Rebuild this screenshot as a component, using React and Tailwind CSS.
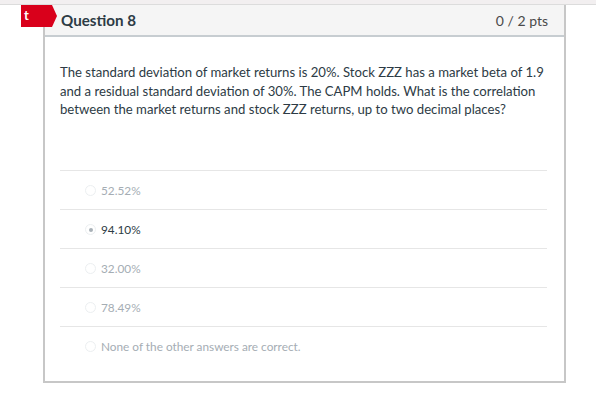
const answers = [
  { id: "a", label: "52.52%" },
  { id: "b", label: "94.10%", selected: true },
  { id: "c", label: "32.00%" },
  { id: "d", label: "78.49%" },
  { id: "e", label: "None of the other answers are correct." },
];

function Radio({ selected }) {
  return (
    <span className="flex h-[11px] w-[11px] items-center justify-center rounded-full border border-[#eceff1] bg-white">
      {selected && <span className="h-[4px] w-[4px] rounded-full bg-[#a9b1b8]" />}
    </span>
  );
}

export default function App() {
  return (
    <div className="relative h-[414px] w-[596px] overflow-hidden bg-white" style={{ fontFamily: "Lato, 'Open Sans', sans-serif" }}>
      <div className="h-[5px] border-b border-[#dcdcdc] bg-[#f2eff0]" />
      {/* flag badge */}
      <div className="absolute left-[21px] top-[5px] flex h-[22px] items-center">
        <div className="flex h-full w-[31px] items-center bg-[#d9001b] pl-[3px] text-[13px] font-bold text-white">t</div>
        <div className="h-0 w-0 border-y-[11px] border-l-[5px] border-y-transparent border-l-[#d9001b]" />
      </div>
      <div className="ml-[43px] w-[523px] border-x-2 border-b-2 border-[#c7c7c7]">
        <div className="flex h-[32px] items-center justify-between border-b-2 border-[#c7cdd1] bg-[#f5f5f5] pl-[16px] pr-[16px]">
          <span className="text-[15.2px] font-bold text-[#2d3b45]">Question 8</span>
          <span className="text-[14px] text-[#4a4a4a]">0 / 2 pts</span>
        </div>
        <div className="px-[15px] pt-[26px] pb-[16px]">
          <p className="text-[13.15px] leading-[18.7px] text-[#2d3b45]">
            The standard deviation of market returns is 20%. Stock ZZZ has a market beta of 1.9 and a residual standard deviation of 30%. The CAPM holds. What is the correlation between the market returns and stock ZZZ returns, up to two decimal places?
          </p>
          <div className="mt-[51px] mr-[2px]">
            {answers.map(a => (
              <div key={a.id} className="flex h-[39px] items-center gap-[5px] border-t border-[#e6e6e6] pl-[25px] pt-[1px]">
                <Radio selected={a.selected} />
                <span className={`text-[11.8px] ${a.selected ? "text-[#2d3b45]" : "text-[#a5adb4]"}`}>{a.label}</span>
              </div>
            ))}
          </div>
        </div>
      </div>
    </div>
  );
}
